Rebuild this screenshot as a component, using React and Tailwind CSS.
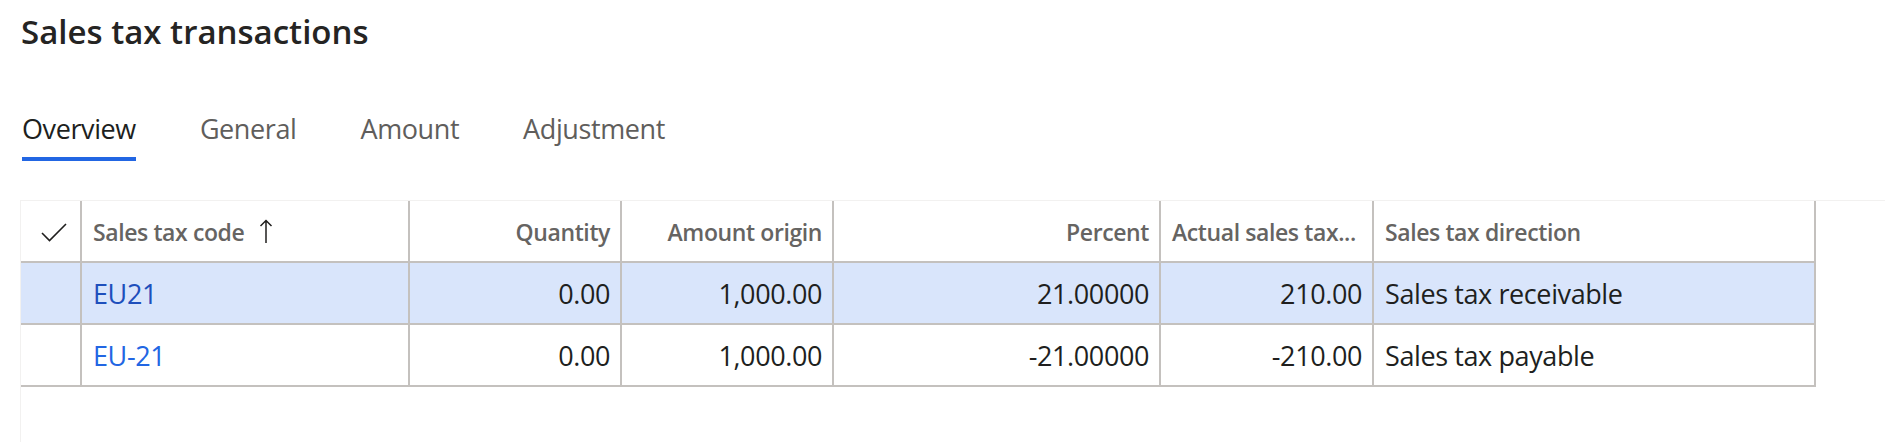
import React from "react";

const rows = [
  {
    code: "EU21",
    qty: "0.00",
    amount: "1,000.00",
    percent: "21.00000",
    actual: "210.00",
    direction: "Sales tax receivable",
    selected: true,
  },
  {
    code: "EU-21",
    qty: "0.00",
    amount: "1,000.00",
    percent: "-21.00000",
    actual: "-210.00",
    direction: "Sales tax payable",
    selected: false,
  },
];

const tabs = ["Overview", "General", "Amount", "Adjustment"];

const CheckIcon = () => (
  <svg width="26" height="19" viewBox="0 0 26 19" fill="none">
    <path d="M1 10 L8.5 17.5 L25 1" stroke="#201f1e" strokeWidth="1.6" />
  </svg>
);

const SortArrow = () => (
  <svg width="14" height="24" viewBox="0 0 14 24" fill="none">
    <path d="M7 1.5 V24 M1.5 7 L7 1.5 L12.5 7" stroke="#201f1e" strokeWidth="1.5" />
  </svg>
);

const Cell = ({ w, align = "left", className = "", children }) => (
  <div
    className={`${w} h-[62px] shrink-0 min-w-0 overflow-hidden whitespace-nowrap border-b-2 border-r-2 border-[#c4c1be] flex items-center pt-[3px] pl-[11px] pr-[10px] ${
      align === "right" ? "justify-end" : ""
    } ${className}`}
  >
    {children}
  </div>
);

const App = () => {
  return (
    <div
      className="w-[1885px] h-[442px] overflow-hidden bg-white text-[#201f1e]"
      style={{ fontFamily: '"Segoe UI", "Open Sans", sans-serif' }}
    >
      {/* page title */}
      <h1 className="pl-[21px] pt-[15px] text-[33px] leading-[34px] font-semibold text-[#252423]">
        Sales tax transactions
      </h1>

      {/* tabs */}
      <div className="flex gap-[64px] pl-[22px] mt-[66px]">
        {tabs.map((t, i) => (
          <div
            key={t}
            className={`text-[27px] leading-[28px] tracking-[-0.4px] pb-[14px] border-b-4 ${
              i === 0
                ? "text-[#201f1e] border-[#2266e3]"
                : "text-[#605e5c] border-transparent"
            }`}
          >
            {t}
          </div>
        ))}
      </div>

      {/* grid card */}
      <div className="ml-[20px] mt-[39px] h-[300px] border-t border-l border-[#f2f1f0]">
        <div className="w-[1795px]">
          {/* header */}
          <div className="flex text-[23px] font-semibold tracking-[-0.4px] text-[#666462]">
            <div className="w-[61px] h-[62px] shrink-0 border-b-2 border-r-2 border-[#c4c1be] flex items-center justify-center pt-[2px] pl-[6px]">
              <CheckIcon />
            </div>
            <Cell w="w-[328px]">
              <span>Sales tax code</span>
              <span className="ml-[15px] -mt-[4px]">
                <SortArrow />
              </span>
            </Cell>
            <Cell w="w-[212px]" align="right">
              Quantity
            </Cell>
            <Cell w="w-[212px]" align="right">
              Amount origin
            </Cell>
            <Cell w="w-[327px]" align="right">
              Percent
            </Cell>
            <Cell w="w-[213px]">Actual sales tax...</Cell>
            <Cell w="w-[442px]">Sales tax direction</Cell>
          </div>

          {/* body rows */}
          {rows.map((r) => (
            <div
              key={r.code}
              className={`flex text-[27px] tracking-[-0.4px] ${r.selected ? "bg-[#d9e5fb]" : "bg-white"}`}
            >
              <Cell w="w-[61px]" />
              <Cell w="w-[328px]">
                <span className={r.selected ? "text-[#1e4fbc]" : "text-[#2266e3]"}>{r.code}</span>
              </Cell>
              <Cell w="w-[212px]" align="right">
                {r.qty}
              </Cell>
              <Cell w="w-[212px]" align="right">
                {r.amount}
              </Cell>
              <Cell w="w-[327px]" align="right">
                {r.percent}
              </Cell>
              <Cell w="w-[213px]" align="right">
                {r.actual}
              </Cell>
              <Cell w="w-[442px]">{r.direction}</Cell>
            </div>
          ))}
        </div>
      </div>
    </div>
  );
};

export default App;
